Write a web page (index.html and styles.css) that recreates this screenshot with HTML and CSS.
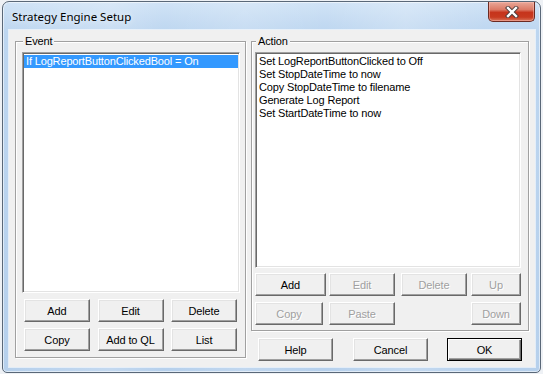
FILE: index.html
```html
<!DOCTYPE html>
<html>
<head>
<meta charset="utf-8">
<link rel="stylesheet" href="styles.css">
</head>
<body>
<div class="window">
  <div class="titlebar">
    <span class="title">Strategy Engine Setup</span>
    <div class="close">
      <svg width="18" height="12" viewBox="0 0 18 12">
        <path d="M5 2 L13 10 M13 2 L5 10" stroke="#4a3a3a" stroke-width="4.2" stroke-linecap="square" fill="none"/>
        <path d="M5 2 L13 10 M13 2 L5 10" stroke="#ffffff" stroke-width="2.4" stroke-linecap="square" fill="none"/>
      </svg>
    </div>
  </div>
  <div class="client">
    <fieldset class="group group-event">
      <legend>Event</legend>
      <div class="listbox list-event">
        <div class="item selected">If LogReportButtonClickedBool = On</div>
      </div>
      <div class="event-btns">
        <button class="btn">Add</button>
        <button class="btn">Edit</button>
        <button class="btn">Delete</button>
        <button class="btn">Copy</button>
        <button class="btn">Add to QL</button>
        <button class="btn">List</button>
      </div>
    </fieldset>
    <div class="right">
      <fieldset class="group group-action">
        <legend>Action</legend>
        <div class="listbox list-action">
          <div class="item">Set LogReportButtonClicked to Off</div>
          <div class="item">Set StopDateTime to now</div>
          <div class="item">Copy StopDateTime to filename</div>
          <div class="item">Generate Log Report</div>
          <div class="item">Set StartDateTime to now</div>
        </div>
        <div class="action-btns">
          <button class="btn w71">Add</button>
          <button class="btn w66 disabled">Edit</button>
          <button class="btn w66 disabled">Delete</button>
          <button class="btn w50 disabled">Up</button>
          <button class="btn w68 disabled">Copy</button>
          <button class="btn w66 disabled">Paste</button>
          <span></span>
          <button class="btn w50 disabled">Down</button>
        </div>
      </fieldset>
      <div class="dialog-btns">
        <button class="btn dlg help">Help</button>
        <button class="btn dlg cancel">Cancel</button>
        <button class="btn dlg ok">OK</button>
      </div>
    </div>
  </div>
</div>
</body>
</html>
```
FILE: styles.css
```css
html, body {
  margin: 0;
  padding: 0;
}
body {
  width: 543px;
  height: 374px;
  background: #eef1f5;
  font-family: "Liberation Sans", Arial, sans-serif;
  font-size: 11px;
  letter-spacing: -0.15px;
  overflow: hidden;
}
.window {
  box-sizing: border-box;
  margin: 1px 0 0 2px;
  width: 539px;
  height: 372px;
  border: 1px solid #5a6878;
  border-radius: 7px 7px 5px 5px;
  background:
    linear-gradient(90deg, rgba(255,255,255,0) 0%, rgba(255,255,255,0.18) 20%, rgba(255,255,255,0) 30%, rgba(255,255,255,0.15) 45%, rgba(255,255,255,0) 60%, rgba(255,255,255,0.2) 75%, rgba(255,255,255,0) 90%),
    linear-gradient(180deg, #d0e3f6 0%, #bdd6f0 8%, #b6d0ec 100%);
  display: flex;
  flex-direction: column;
  padding: 0 5px 5px 6px;
  box-shadow: inset 0 0 0 1px rgba(255,255,255,0.55);
}
.titlebar {
  height: 28px;
  display: flex;
  align-items: flex-start;
}
.title {
  font-family: "Noto Sans", "Open Sans", sans-serif;
  font-size: 11.5px;
  letter-spacing: 0;
  color: #000;
  margin: 7px 0 0 3px;
  line-height: 16px;
  text-shadow: 0 0 6px rgba(255,255,255,0.9);
}
.close {
  margin-left: auto;
  margin-right: 0;
  margin-top: 0;
  width: 47px;
  height: 20px;
  box-sizing: border-box;
  border: 1px solid #6b2a22;
  border-top: none;
  border-radius: 0 0 5px 5px;
  background: linear-gradient(180deg, #e9a899 0%, #dc7a66 40%, #c6341c 55%, #c83a20 80%, #d9765c 100%);
  display: flex;
  align-items: center;
  justify-content: center;
  box-shadow: inset 0 0 0 1px rgba(255,200,190,0.45);
}
.close svg {
  display: block;
}
.client {
  flex: 1;
  background: #f0f0f0;
  display: flex;
  gap: 5px;
  padding: 5px 6px 0 6px;
  box-sizing: border-box;
  box-shadow: 0 0 0 1px rgba(255,255,255,0.6);
}
.group {
  margin: 0;
  min-width: 0;
  border: 1px solid #a0a0a0;
  box-shadow: inset 1px 1px 0 #fff, 1px 1px 0 #fff;
  box-sizing: border-box;
}
.group legend {
  padding: 0 2px;
  margin-left: 1px;
  line-height: 13px;
  background: #f0f0f0;
  color: #000;
}
.group-event {
  width: 231px;
  height: 323px;
  padding: 4px 6px 5px 6px;
}
.group-action {
  width: 278px;
  height: 296px;
  padding: 4px 6px 4px 3px;
}
.right {
  display: flex;
  flex-direction: column;
}
.listbox {
  background: #fff;
  border: 1px solid;
  border-color: #a0a0a0 #fff #fff #a0a0a0;
  box-shadow: inset 1px 1px 0 #696969, inset -1px -1px 0 #e3e3e3;
  box-sizing: border-box;
  padding: 2px 1px 2px 1px;
}
.list-event {
  width: 218px;
  height: 241px;
}
.list-action {
  width: 266px;
  height: 216px;
}
.item {
  line-height: 13px;
  height: 13px;
  padding-left: 2px;
  white-space: nowrap;
  color: #000;
}
.item.selected {
  background: #3399ff;
  color: #fff;
}
.btn {
  font-family: "Liberation Sans", Arial, sans-serif;
  font-size: 11px;
  letter-spacing: -0.1px;
  color: #000;
  background: #f0f0f0;
  border: 1px solid;
  border-color: #fff #696969 #696969 #fff;
  box-shadow: inset -1px -1px 0 #a0a0a0, inset 1px 1px 0 #e3e3e3;
  box-sizing: border-box;
  height: 23px;
  padding: 1px 0 0 0;
  margin: 0;
  border-radius: 0;
}
.btn.disabled {
  color: #a0a0a0;
  text-shadow: 1px 1px 0 #fff;
}
.event-btns {
  margin: 6px 2px 0 2px;
  display: grid;
  grid-template-columns: 66px 66px 66px;
  justify-content: space-between;
  row-gap: 6px;
}
.action-btns {
  margin-top: 5px;
  display: grid;
  grid-template-columns: 74px 72px 70px 50px;
  row-gap: 6px;
  justify-items: start;
}
.w71 { width: 71px; }
.w66 { width: 66px; }
.w68 { width: 68px; }
.w50 { width: 50px; }
.dialog-btns {
  margin-top: 7px;
  display: flex;
  padding-left: 7px;
}
.dlg {
  width: 75px;
}
.cancel {
  margin-left: 20px;
}
.ok {
  margin-left: 19px;
  border: 1px solid #000;
  box-shadow: inset 1px 1px 0 #fff, inset -1px -1px 0 #696969, inset -2px -2px 0 #a0a0a0;
}
```
